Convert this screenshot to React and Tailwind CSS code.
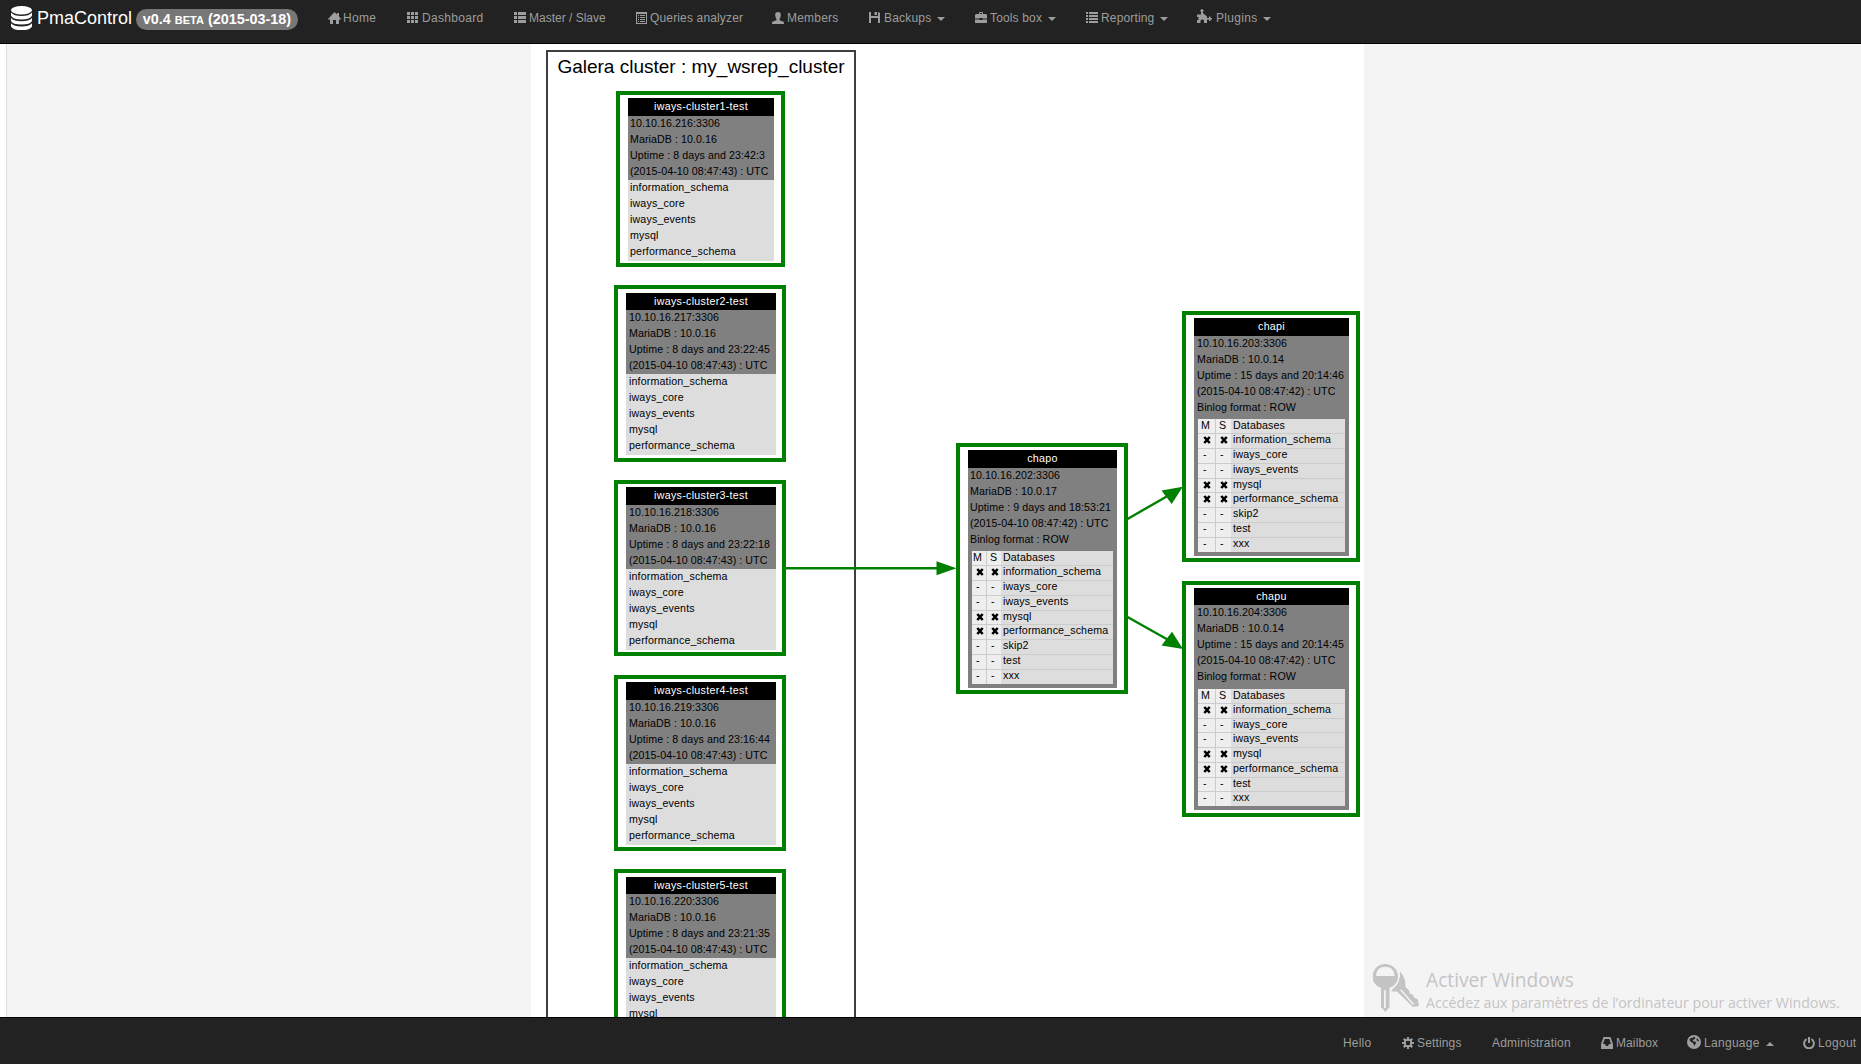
import React from "react";

const CLUSTER_DATABASES = ["information_schema", "iways_core", "iways_events", "mysql", "performance_schema"];

const SHARED = new Set(["information_schema", "mysql", "performance_schema"]);

const CLUSTER = [
  { name: "iways-cluster1-test", ip: "10.10.16.216:3306", uptime: "8 days and 23:42:3", box: "left-[616px] top-[91px] w-[169px] h-[176px] pt-[3px] pl-[8px] pr-[7px]", title: "h-[18px]", pad: "pl-[2px]" },
  { name: "iways-cluster2-test", ip: "10.10.16.217:3306", uptime: "8 days and 23:22:45", box: "left-[614px] top-[285px] w-[172px] h-[177px] pt-[4px] pl-[8px] pr-[6px]", title: "h-[17px]", pad: "pl-[3px]" },
  { name: "iways-cluster3-test", ip: "10.10.16.218:3306", uptime: "8 days and 23:22:18", box: "left-[614px] top-[480px] w-[172px] h-[176px] pt-[3px] pl-[8px] pr-[6px]", title: "h-[18px]", pad: "pl-[3px]" },
  { name: "iways-cluster4-test", ip: "10.10.16.219:3306", uptime: "8 days and 23:16:44", box: "left-[614px] top-[675px] w-[172px] h-[176px] pt-[3px] pl-[8px] pr-[6px]", title: "h-[18px]", pad: "pl-[3px]" },
  { name: "iways-cluster5-test", ip: "10.10.16.220:3306", uptime: "8 days and 23:21:35", box: "left-[614px] top-[869px] w-[172px] h-[177px] pt-[4px] pl-[8px] pr-[6px]", title: "h-[17px]", pad: "pl-[3px]" },
];

const ALL_DATABASES = ["information_schema", "iways_core", "iways_events", "mysql", "performance_schema", "skip2", "test", "xxx"];

const REPLICAS = [
  {
    name: "chapo", ip: "10.10.16.202:3306", version: "10.0.17", uptime: "9 days and 18:53:21", databases: ALL_DATABASES,
    box: "left-[956px] top-[443px] w-[172px] h-[251px] pl-[8px] pr-[7px]", table: "h-[238px]", title: "h-[18px]", pad: "pl-[2px]", gap: "mt-[3px]",
    cols: "grid-cols-[15px_14px_1fr]", master: "pl-[4px]", masterHead: "pl-[1px]",
  },
  {
    name: "chapi", ip: "10.10.16.203:3306", version: "10.0.14", uptime: "15 days and 20:14:46", databases: ALL_DATABASES,
    box: "left-[1182px] top-[311px] w-[178px] h-[251px] pl-[8px] pr-[7px]", table: "h-[238px]", title: "h-[18px]", pad: "pl-[3px]", gap: "mt-[3px]",
    cols: "grid-cols-[18px_15px_1fr]", master: "pl-[5px]", masterHead: "pl-[3px]",
  },
  {
    name: "chapu", ip: "10.10.16.204:3306", version: "10.0.14", uptime: "15 days and 20:14:45", databases: ALL_DATABASES.filter((d) => d !== "skip2"),
    box: "left-[1182px] top-[581px] w-[178px] h-[236px] pl-[8px] pr-[7px]", table: "h-[222px]", title: "h-[17px]", pad: "pl-[3px]", gap: "mt-[4px]",
    cols: "grid-cols-[18px_15px_1fr]", master: "pl-[5px]", masterHead: "pl-[3px]",
  },
];

function Icon({ w, h, className = "", children }) {
  return (
    <svg width={w} height={h} viewBox={`0 0 ${w} ${h}`} fill="currentColor" className={`shrink-0 ${className}`}>
      {children}
    </svg>
  );
}

const HomeIcon = () => (
  <Icon w={13} h={12}><path d="M6.5 0 9 2.6V1h2v3.6L13 7v.6h-2V12H8V8H5v4H2V7.6H0V7Z" /></Icon>
);
const GridIcon = () => (
  <Icon w={11} h={11}><path d="M0 0h3v3H0zM4 0h3v3H4zM8 0h3v3H8zM0 4h3v3H0zM4 4h3v3H4zM8 4h3v3H8zM0 8h3v3H0zM4 8h3v3H4zM8 8h3v3H8z" /></Icon>
);
const ThListIcon = () => (
  <Icon w={12} h={11}><path d="M0 0h3v3H0zM4 0h8v3H4zM0 4h3v3H0zM4 4h8v3H4zM0 8h3v3H0zM4 8h8v3H4z" /></Icon>
);
const ListAltIcon = () => (
  <Icon w={11} h={12}>
    <path fillRule="evenodd" d="M0 0h11v12H0zM1 2v9h9V2z" />
    <path d="M2 3h1v1H2zM4 3h5v1H4zM2 5h1v1H2zM4 5h5v1H4zM2 7h1v1H2zM4 7h5v1H4zM2 9h1v1H2zM4 9h5v1H4z" />
  </Icon>
);
const UserIcon = () => (
  <Icon w={12} h={12}><path d="M4 .5Q6 -.5 8 .5 9 1.200 8.700 4 8.400 6 7.500 7v1.200L11 9.600q1 .4 1 1.200V12H0v-1.200q0-.8 1-1.200l3.500-1.400V7Q3.600 6 3.300 4 3 1.200 4 .5Z" /></Icon>
);
const FloppyIcon = () => (
  <Icon w={11} h={11}><path fillRule="evenodd" d="M0 0h2v4h7V0h.7L11 1.300V11H9V6H2v5H0zM5.500 0H8v3H5.500z" /></Icon>
);
const BriefcaseIcon = () => (
  <Icon w={12} h={11}><path fillRule="evenodd" d="M4 2V.7L4.700 0h2.600L8 .7V2h3l1 1v3.500H7.500V6h-3v.5H0V3l1-1zM5 1v1h2V1zM0 7.500h4.500V8h3v-.5H12V11H0z" /></Icon>
);
const ListIcon = () => (
  <Icon w={12} h={11}><path d="M0 0h2v2H0zM3 0h9v2H3zM0 3h2v2H0zM3 3h9v2H3zM0 6h2v2H0zM3 6h9v2H3zM0 9h2v2H0zM3 9h9v2H3z" /></Icon>
);
const PuzzleIcon = () => (
  <Icon w={15} h={14}><path d="M4.300 0h1.400v.8L7 1.500 5.800 2.800V4L10 7.500V9h2V7.500h1.500V9H15v1.500h-1.500V12H12v-1.500h-2V14H7v-2.500L6 10.500H4.500l-1 1V14H0v-3h1.500V8H0V5.500h4V2.800L3 1.500 4.300.8Z" /></Icon>
);
const CogIcon = () => (
  <Icon w={12} h={12}><path fillRule="evenodd" d="M5 0h2v2h1.500L9.500 1 11 2.500l-1 1V5h2v2h-2v1.500l1 1L9.500 11l-1-1H7v2H5v-2H3.500l-1 1L1 9.500l1-1V7H0V5h2V3.500l-1-1L2.500 1l1 1H5zM4 4v4h4V4z" /></Icon>
);
const InboxIcon = () => (
  <Icon w={12} h={12}><path fillRule="evenodd" d="M2.500 0h7L12 7v5H0V7zM3.700 2 2 7h2l1 2h2l1-2h2L8.300 2z" /></Icon>
);
const GlobeIcon = () => (
  <Icon w={14} h={14}>
    <path fillRule="evenodd" d="M7 0a7 7 0 1 1 0 14A7 7 0 0 1 7 0ZM3 3.200 2.500 5l1.500 2 1.500.5L7 10v1.500l1-2L9.200 8 8 6.500H6.500L5.500 5 7 4.500 8.500 3 7 1.500 5.500 3ZM10 3l-.5 2 1.500 1.500L12 5.500Z" />
  </Icon>
);
const PowerIcon = () => (
  <Icon w={12} h={12}>
    <path d="M3.600 2.200a4.900 4.900 0 1 0 4.800 0" fill="none" stroke="currentColor" strokeWidth="2" />
    <path d="M5 0h2v6H5z" />
  </Icon>
);
const CaretDown = () => <Icon w={8} h={4} className="ml-[6px] mt-[2px]"><path d="M0 0h8L4 4Z" /></Icon>;
const CaretUp = () => <Icon w={8} h={4} className="ml-[6px] mt-[2px]"><path d="M0 4h8L4 0Z" /></Icon>;

const NAV = [
  { label: "Home", icon: <HomeIcon />, w: "w-[79px]", slot: "w-[15px] pt-px", track: "tracking-[0.3px]" },
  { label: "Dashboard", icon: <GridIcon />, w: "w-[107px]", slot: "w-[15px]", track: "tracking-[0.3px]" },
  { label: "Master / Slave", icon: <ThListIcon />, w: "w-[122px]", slot: "w-[15px]", track: "tracking-normal" },
  { label: "Queries analyzer", icon: <ListAltIcon />, w: "w-[136px]", slot: "w-[14px]", track: "tracking-[0.15px]" },
  { label: "Members", icon: <UserIcon />, w: "w-[97px]", slot: "w-[15px]", track: "tracking-[0.2px]" },
  { label: "Backups", icon: <FloppyIcon />, w: "w-[106px]", slot: "w-[15px]", caret: true, track: "tracking-[0.2px]" },
  { label: "Tools box", icon: <BriefcaseIcon />, w: "w-[111px]", slot: "w-[15px]", caret: true, track: "tracking-[0.15px]" },
  { label: "Reporting", icon: <ListIcon />, w: "w-[111px]", slot: "w-[15px]", caret: true, track: "tracking-[0.15px]" },
  { label: "Plugins", icon: <PuzzleIcon />, w: "w-[90px]", slot: "w-[19px] pb-[3px]", caret: true, track: "tracking-[0.3px]" },
];

const FOOTER = [
  { label: "Hello", w: "w-[59px]", track: "tracking-[0.2px]" },
  { label: "Settings", icon: <CogIcon />, w: "w-[90px]", slot: "w-[15px]", track: "tracking-[0.15px]" },
  { label: "Administration", w: "w-[109px]", track: "tracking-[0.2px]" },
  { label: "Mailbox", icon: <InboxIcon />, w: "w-[86px]", slot: "w-[15px]", track: "tracking-[0.1px]" },
  { label: "Language", icon: <GlobeIcon />, w: "w-[116px]", slot: "w-[17px] pb-[2px]", caret: true, track: "tracking-[0.3px]" },
  { label: "Logout", icon: <PowerIcon />, w: "w-[58px]", slot: "w-[15px]", track: "tracking-[0.3px]" },
];

function Header() {
  return (
    <header className="flex h-[44px] shrink-0 items-start border-b border-black bg-[#222] text-[#9d9d9d]">
      <div className="flex w-[328px] items-start pl-[11px] text-white">
        <svg width="21" height="24" viewBox="0 0 21 24" fill="currentColor" className="mt-[6px] shrink-0">
          <ellipse cx="10.500" cy="4.200" rx="10.500" ry="4.200" />
          <path d="M0 6.500q3 3.500 10.500 3.500T21 6.500v3.300q-1.500 3.700-10.500 3.700T0 9.800Z" />
          <path d="M0 12q3 3.300 10.500 3.300T21 12v3q-1.500 3.600-10.500 3.600T0 15Z" />
          <path d="M0 17.200q3 3.300 10.500 3.300T21 17.200v3.200Q19.500 24 10.500 24T0 20.400Z" />
        </svg>
        <span className="ml-[5px] mt-[7px] w-[95px] whitespace-nowrap text-[18px] leading-[22px]">PmaControl</span>
        <span className="ml-[4px] mt-[9px] flex h-[21px] w-[162px] items-center justify-center whitespace-nowrap rounded-full bg-[#777] text-[14.4px] font-bold leading-[21px]">
          v0.4&nbsp;<span className="mt-[2px] text-[11px]">BETA</span>&nbsp;(2015-03-18)
        </span>
      </div>
      <nav className="flex h-[35px] items-center text-[12px]">
        {NAV.map((n) => (
          <a key={n.label} className={`flex items-center whitespace-nowrap ${n.w}`}>
            <span className={`shrink-0 ${n.slot}`}>{n.icon}</span>
            <span className={n.track}>{n.label}</span>
            {n.caret && <CaretDown />}
          </a>
        ))}
      </nav>
    </header>
  );
}

function Footer() {
  return (
    <footer className="flex h-[47px] shrink-0 items-start justify-end border-t border-black bg-[#222] text-[#9d9d9d]">
      <nav className="flex h-[49px] items-center text-[12px]">
        {FOOTER.map((n) => (
          <a key={n.label} className={`flex items-center whitespace-nowrap ${n.w}`}>
            {n.icon && <span className={`shrink-0 ${n.slot}`}>{n.icon}</span>}
            <span className={n.track}>{n.label}</span>
            {n.caret && <CaretUp />}
          </a>
        ))}
      </nav>
    </footer>
  );
}

function NodeTitle({ size, children }) {
  return <div className={`bg-black text-center leading-[16px] tracking-[0.3px] text-white ${size}`}>{children}</div>;
}

function InfoRow({ pad, children }) {
  return <div className={`h-[16px] whitespace-nowrap leading-[14px] ${pad}`}>{children}</div>;
}

function ClusterNode({ node }) {
  return (
    <div className={`absolute border-4 border-[#008000] bg-white text-[10.67px] text-black ${node.box}`}>
      <NodeTitle size={node.title}>{node.name}</NodeTitle>
      <div className="bg-[#808080] tracking-[0.06px]">
        <InfoRow pad={node.pad}>{node.ip}</InfoRow>
        <InfoRow pad={node.pad}>MariaDB : 10.0.16</InfoRow>
        <InfoRow pad={node.pad}>Uptime : {node.uptime}</InfoRow>
        <InfoRow pad={node.pad}>(2015-04-10 08:47:43) : UTC</InfoRow>
      </div>
      <div className="bg-[#ddd] pb-px tracking-[0.15px]">
        {CLUSTER_DATABASES.map((d) => <InfoRow key={d} pad={node.pad}>{d}</InfoRow>)}
      </div>
    </div>
  );
}

function Mark({ on, pad }) {
  if (!on) return <span className={`block ${pad}`}>-</span>;
  return (
    <span className={`block ${pad}`}>
      <svg width="8" height="8" viewBox="0 0 8 8" className="mt-[2px]">
        <path d="M1.300 1 6.700 7M6.700 1 1.300 7" stroke="#000" strokeWidth="2.600" />
      </svg>
    </span>
  );
}

function ReplicaNode({ node }) {
  return (
    <div className={`absolute border-4 border-[#008000] bg-white pt-[3px] text-[10.67px] text-black ${node.box}`}>
      <div className={`flex flex-col bg-[#808080] tracking-[0.06px] ${node.table}`}>
        <NodeTitle size={node.title}>{node.name}</NodeTitle>
        <InfoRow pad={node.pad}>{node.ip}</InfoRow>
        <InfoRow pad={node.pad}>MariaDB : {node.version}</InfoRow>
        <InfoRow pad={node.pad}>Uptime : {node.uptime}</InfoRow>
        <InfoRow pad={node.pad}>(2015-04-10 08:47:42) : UTC</InfoRow>
        <InfoRow pad={node.pad}>Binlog format : ROW</InfoRow>
        <div className={`mx-[4px] mb-[4px] flex flex-1 flex-col bg-[#ddd] tracking-[0.12px] ${node.gap}`}>
          <div className={`grid flex-1 leading-[12px] ${node.cols}`}>
            <span className={`border-r border-[#ccc] bg-[#eee] ${node.masterHead}`}>M</span>
            <span className="bg-[#eee] pl-[3px]">S</span>
            <span className="pl-[2px]">Databases</span>
          </div>
          {node.databases.map((d) => (
            <div key={d} className={`grid flex-1 border-t border-[#ccc] leading-[10px] ${node.cols}`}>
              <span className="border-r border-[#ccc] bg-[#eee]"><Mark on={SHARED.has(d)} pad={node.master} /></span>
              <span className="bg-[#eee]"><Mark on={SHARED.has(d)} pad="pl-[4px]" /></span>
              <span className="pl-[2px]">{d}</span>
            </div>
          ))}
        </div>
      </div>
    </div>
  );
}

function Arrows() {
  return (
    <svg width="1861" height="1064" viewBox="0 0 1861 1064" className="pointer-events-none absolute left-0 top-0" fill="#008000" stroke="#008000">
      <path d="M786 568.300H940M1127.500 519l40-23M1127.500 617l40 22.500" strokeWidth="2.400" fill="none" />
      <path stroke="none" d="M956.500 568.300 936.500 575.300V561.300ZM1182.800 486.700 1171.700 504 1161.500 490.500ZM1183 649 1161.500 645.500 1172 631.800Z" />
    </svg>
  );
}

function ActivationNotice() {
  return (
    <div className="absolute left-[1373px] top-[963px] flex text-[#c4c4c4]">
      <svg width="47" height="50" viewBox="0 0 47 50" fill="currentColor" className="shrink-0">
        <path fillRule="evenodd" d="M12.300 1A12.300 12.300 0 0 1 16.500 25V44l-4 5-4.500-5V25A12.300 12.300 0 0 1 12.300 1ZM3 13H21.700Q21 3.700 12.300 3.700T3 13ZM11 27V45h1.700V27Z" />
        <path fillRule="evenodd" d="M27 8.500Q33 15 32.500 24l4 4v2.500l3.500 1 1 3 4 2 1 6.500-6 1L24 28.500h-5.500l.5-2Q28 20 27 8.500ZM27 27l13 15 1.500-.5L28.500 26.500Z" />
      </svg>
      <div className="ml-[6px] whitespace-nowrap font-['Open_Sans',sans-serif]">
        <div className="mt-[4px] text-[19.2px] leading-[26px]">Activer Windows</div>
        <div className="mt-px text-[14.2px] leading-[18px]">Accédez aux paramètres de l’ordinateur pour activer Windows.</div>
      </div>
    </div>
  );
}

export default function App() {
  return (
    <div className="relative flex h-[1064px] w-[1861px] flex-col overflow-hidden bg-white font-['Liberation_Sans',Arial,sans-serif]">
      <Header />
      <main className="flex min-h-0 flex-1 pl-[6px]">
        <div className="flex flex-1 overflow-hidden border-l border-[#ddd] bg-[#f4f4f4]">
          <section className="ml-[524px] w-[833px] bg-white pl-[15px] pt-[6px]">
            <div className="h-[1100px] w-[310px] border-2 border-[#3f3f3f] pt-[3px] text-center text-[19px] leading-[24px]">
              Galera cluster : my_wsrep_cluster
            </div>
          </section>
        </div>
      </main>
      <div className="absolute left-0 top-0 h-[1017px] w-[1861px] overflow-hidden">
        <Arrows />
        {CLUSTER.map((n) => <ClusterNode key={n.name} node={n} />)}
        {REPLICAS.map((n) => <ReplicaNode key={n.name} node={n} />)}
        <ActivationNotice />
      </div>
      <Footer />
    </div>
  );
}
